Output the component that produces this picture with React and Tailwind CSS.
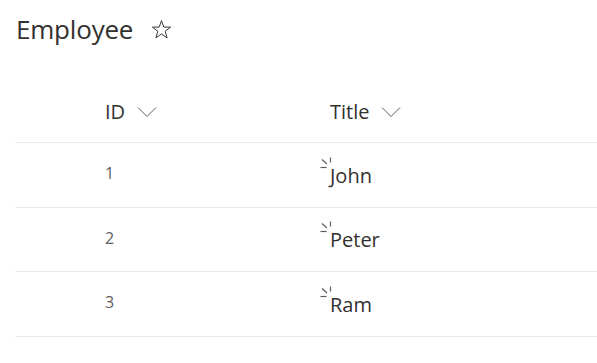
import React from 'react'

const rows = [
  { id: 1, title: 'John' },
  { id: 2, title: 'Peter' },
  { id: 3, title: 'Ram' },
]

function Chevron() {
  return (
    <svg width="20" height="12" viewBox="0 0 20 12" fill="none" className="ml-[12px]">
      <path d="M1 1.5 L10 10.5 L19 1.5" stroke="#605e5c" strokeWidth="1" />
    </svg>
  )
}

function Star() {
  return (
    <svg width="21" height="21" viewBox="0 0 24 24" fill="none">
      <path
        d="M12 1.8 L14.6 9.2 L22.4 9.3 L16.2 14 L18.4 21.6 L12 17.1 L5.6 21.6 L7.8 14 L1.6 9.3 L9.4 9.2 Z"
        stroke="#323130"
        strokeWidth="1.1"
        strokeLinejoin="miter"
      />
    </svg>
  )
}

function Spinner() {
  return (
    <svg width="13" height="13" viewBox="0 0 13 13" fill="none" className="absolute left-[-11px] top-[-4px]">
      <path d="M11.5 0.5 V5.5" stroke="#605e5c" strokeWidth="1.2" />
      <path d="M3 2.5 L8 7" stroke="#605e5c" strokeWidth="1.2" />
      <path d="M1.5 10.5 H7.5" stroke="#605e5c" strokeWidth="1.2" />
    </svg>
  )
}

export default function App() {
  return (
    <div className="w-[597px] h-[363px] bg-white text-[#323130] font-['Open_Sans','Noto_Sans',sans-serif] overflow-hidden">
      {/* Header */}
      <div className="h-[58px] pl-[16px] flex items-center gap-[18px]">
        <h1 className="text-[26px] tracking-[-0.2px] font-normal">Employee</h1>
        <Star />
      </div>

      {/* List */}
      <div className="ml-[15px]">
        <div className="h-[85px] pt-[23px] flex items-center border-b border-[#edebe9]">
          <div className="w-[315px] pl-[90px] flex items-center text-[20px]">
            ID
            <Chevron />
          </div>
          <div className="flex items-center text-[20px]">
            Title
            <Chevron />
          </div>
        </div>
        {rows.map(r => (
          <div key={r.id} className="h-[64.5px] flex items-center border-b border-[#edebe9]">
            <div className="w-[315px] pl-[90px] text-[16px] text-[#605e5c] -mt-[3px]">{r.id}</div>
            <div className="relative text-[20px] mt-[2px]">
              <Spinner />
              {r.title}
            </div>
          </div>
        ))}
      </div>
    </div>
  )
}
